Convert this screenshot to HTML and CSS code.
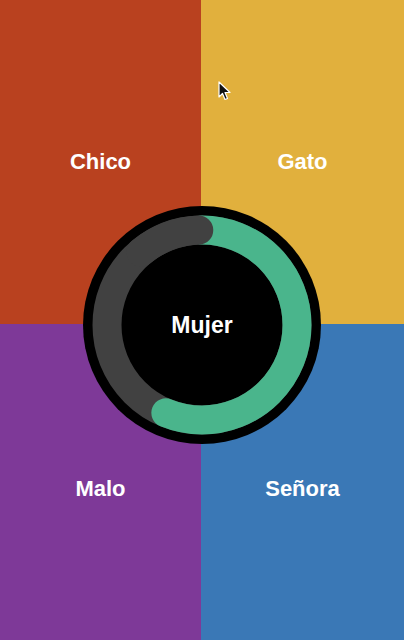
FILE: index.html
```html
<!DOCTYPE html>
<html lang="es">
<head>
    <meta charset="UTF-8">
    <meta name="viewport" content="width=device-width, initial-scale=1.0">
    <title>Palabras</title>
    <link rel="stylesheet" href="styles.css">
</head>
<body>
    <div class="board">
        <div class="tile tile-red"><span>Chico</span></div>
        <div class="tile tile-yellow"><span>Gato</span></div>
        <div class="tile tile-purple tile-bottom"><span>Malo</span></div>
        <div class="tile tile-blue tile-bottom"><span>Señora</span></div>

        <!-- timer ring with the current word -->
        <div class="timer">
            <svg class="ring" width="238" height="238" viewBox="0 0 238 238">
                <circle cx="119" cy="119" r="95" fill="none" stroke="#414141" stroke-width="29"/>
                <circle cx="119" cy="119" r="95" fill="none" stroke="#4ab58c" stroke-width="29"
                        stroke-linecap="round" stroke-dasharray="335 600"
                        transform="rotate(-90 119 119)"/>
                <!-- remaining time end sits over the start of the progress arc -->
                <circle cx="119" cy="119" r="95" fill="none" stroke="#414141" stroke-width="29"
                        stroke-linecap="round" stroke-dasharray="63 600"
                        transform="rotate(-130 119 119)"/>
            </svg>
            <div class="word">Mujer</div>
        </div>

        <svg class="cursor" width="14" height="20" viewBox="0 0 14 20">
            <path d="M1 1 L1 16 L4.5 12.5 L7 18.5 L9.5 17.5 L7 11.5 L12 11.5 Z" fill="#111" stroke="#fff" stroke-width="1.2" stroke-linejoin="round"/>
        </svg>
    </div>
</body>
</html>
```

FILE: styles.css
```css
body {
    margin: 0;
    padding: 0;
    font-family: "Liberation Sans", Arial, sans-serif;
    background: #000;
}

.board {
    position: relative;
    width: 404px;
    height: 640px;
    display: grid;
    grid-template-columns: 201px 1fr;
    grid-template-rows: 324px 1fr;
    overflow: hidden;
}

.tile {
    display: flex;
    justify-content: center;
    align-items: center;
    color: #fff;
    font-size: 22px;
    font-weight: bold;
}

.tile-bottom {
    padding-top: 14px;
}

.tile-red {
    background: #b9411f;
}

.tile-yellow {
    background: #e1b03d;
}

.tile-purple {
    background: #7e3998;
}

.tile-blue {
    background: #3a78b6;
}

.timer {
    position: absolute;
    left: 83px;
    top: 206px;
    width: 238px;
    height: 238px;
    border-radius: 50%;
    background: #000;
}

.ring {
    position: absolute;
    left: 0;
    top: 0;
}

.word {
    position: absolute;
    inset: 0;
    display: flex;
    justify-content: center;
    align-items: center;
    color: #fff;
    font-size: 23px;
    font-weight: bold;
}

.cursor {
    position: absolute;
    left: 218px;
    top: 81px;
}
```
